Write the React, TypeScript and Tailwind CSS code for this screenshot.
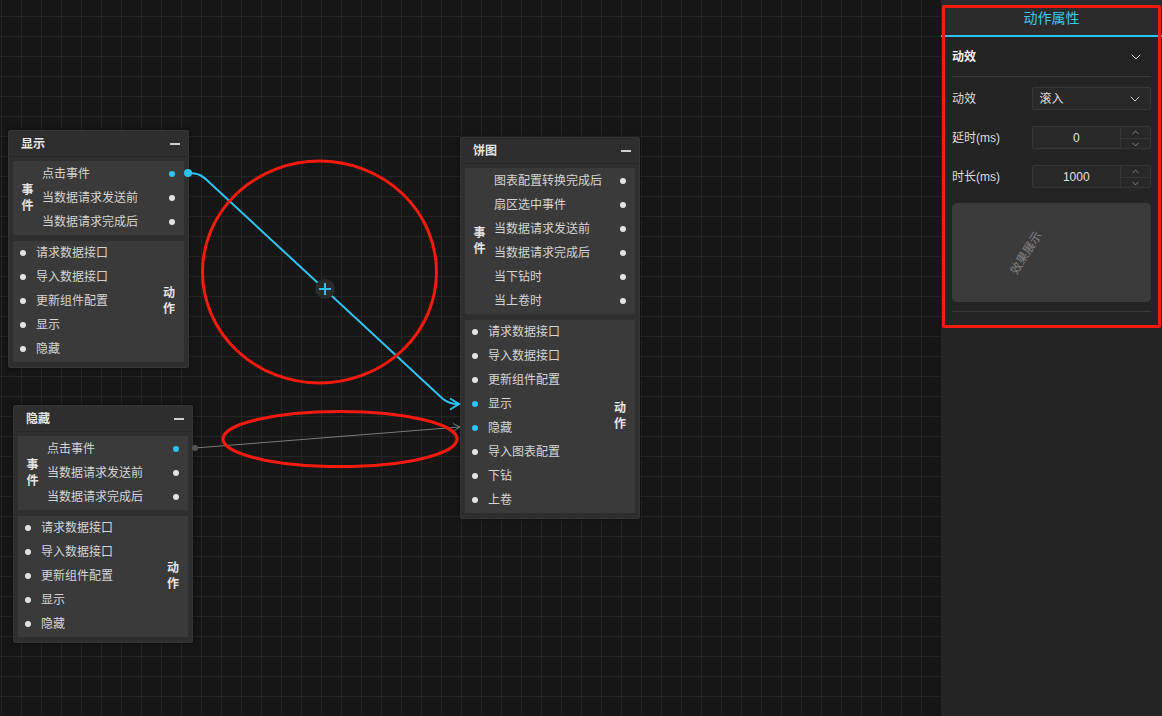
import { ChevronDown, ChevronUp } from "lucide-react";

type NodeProps = {
  title: string;
  x: number;
  y: number;
  width: number;
  events: string[];
  actions: string[];
  activeEvents?: number[];
  activeActions?: number[];
};

const Dot = ({ active }: { active?: boolean }) => (
  <span
    className={`block w-[6px] h-[6px] rounded-full shrink-0 ${
      active ? "bg-[#2cc3f0]" : "bg-[#e2e2e2]"
    }`}
  />
);

const VLabel = ({ text }: { text: string }) => (
  <div className="flex flex-col items-center font-bold text-[12px] leading-[16px] text-[#e4e4e4]">
    {text.split("").map((c) => (
      <span key={c}>{c}</span>
    ))}
  </div>
);

const FlowNode = ({
  title,
  x,
  y,
  width,
  events,
  actions,
  activeEvents = [],
  activeActions = [],
}: NodeProps) => (
  <div
    className="absolute bg-[#2e2e2e] border border-[#363636] rounded-[2px] shadow-[0_0_4px_rgba(0,0,0,0.5)]"
    style={{ left: x, top: y, width }}
  >
    <div className="h-[26px] flex items-center justify-between pl-[12px] pr-[8px] border-b border-[#272727]">
      <span className="text-[12px] font-bold text-[#e6e6e6]">{title}</span>
      <span className="block w-[10px] h-[2px] bg-[#cfcfcf]" />
    </div>
    <div className="px-[4px] pt-[4px] pb-[5px] flex flex-col gap-[6px]">
      <div className="flex bg-[#3a3a3a] py-[1px]">
        <div className="w-[29px] flex items-center justify-center">
          <VLabel text="事件" />
        </div>
        <div className="flex-1 flex flex-col">
          {events.map((e, i) => (
            <div
              key={e}
              className="h-6 flex items-center justify-between pr-[9px] text-[12px] text-[#d4d4d4]"
            >
              <span>{e}</span>
              <Dot active={activeEvents.includes(i)} />
            </div>
          ))}
        </div>
      </div>
      <div className="flex bg-[#3a3a3a] pb-[1px]">
        <div className="flex-1 flex flex-col">
          {actions.map((a, i) => (
            <div
              key={a}
              className="h-6 flex items-center gap-[10px] pl-[7px] text-[12px] text-[#d4d4d4]"
            >
              <Dot active={activeActions.includes(i)} />
              <span>{a}</span>
            </div>
          ))}
        </div>
        <div className="w-[30px] flex items-center justify-center">
          <VLabel text="动作" />
        </div>
      </div>
    </div>
  </div>
);

const baseActions = ["请求数据接口", "导入数据接口", "更新组件配置", "显示", "隐藏"];
const baseEvents = ["点击事件", "当数据请求发送前", "当数据请求完成后"];

const NumberInput = ({ value }: { value: string }) => (
  <div className="w-[120px] h-[23px] flex bg-[#282828] border border-[#363636] rounded-[2px]">
    <div className="flex-1 flex items-center justify-center text-[12px] text-[#e0e0e0]">
      {value}
    </div>
    <div className="w-[30px] border-l border-[#363636] flex flex-col">
      <div className="flex-1 flex items-center justify-center border-b border-[#363636]">
        <ChevronUp size={11} strokeWidth={1.5} className="text-[#a8a8a8]" />
      </div>
      <div className="flex-1 flex items-center justify-center">
        <ChevronDown size={11} strokeWidth={1.5} className="text-[#a8a8a8]" />
      </div>
    </div>
  </div>
);

export default function App() {
  return (
    <div className="w-[1162px] h-[716px] flex overflow-hidden relative font-['Liberation_Sans','Noto_Sans_CJK_SC',sans-serif] leading-none">
      <div className="relative flex-1 bg-[#161616] bg-[linear-gradient(to_right,#252525_1px,transparent_1px),linear-gradient(to_bottom,#252525_1px,transparent_1px)] bg-[size:20px_20px] bg-[position:1px_16px]">
        <FlowNode
          title="显示"
          x={8}
          y={130}
          width={181}
          events={baseEvents}
          actions={baseActions}
          activeEvents={[0]}
        />
        <FlowNode
          title="隐藏"
          x={13}
          y={405}
          width={180}
          events={baseEvents}
          actions={baseActions}
          activeEvents={[0]}
        />
        <FlowNode
          title="饼图"
          x={460}
          y={137}
          width={180}
          events={[
            "图表配置转换完成后",
            "扇区选中事件",
            "当数据请求发送前",
            "当数据请求完成后",
            "当下钻时",
            "当上卷时",
          ]}
          actions={[
            "请求数据接口",
            "导入数据接口",
            "更新组件配置",
            "显示",
            "隐藏",
            "导入图表配置",
            "下钻",
            "上卷",
          ]}
          activeActions={[3, 4]}
        />
        <svg
          className="absolute inset-0 pointer-events-none"
          width={941}
          height={716}
        >
          <path
            d="M188 173 C 198 173, 202 175, 210 183 L 443 399 C 448 403, 452 404, 458 404"
            fill="none"
            stroke="#2cc3f0"
            strokeWidth={2}
          />
          <path
            d="M450 398.5 L 459 404 L 450 409.5"
            fill="none"
            stroke="#2cc3f0"
            strokeWidth={2}
          />
          <circle cx={188} cy={173} r={4} fill="#2cc3f0" />
          <line x1={195} y1={448} x2={460} y2={427} stroke="#7a7a7a" strokeWidth={1} />
          <path d="M453 423.5 L 460 427 L 453.5 431" fill="none" stroke="#7a7a7a" strokeWidth={1} />
          <circle cx={195} cy={448} r={3} fill="#555" />
          <circle cx={325} cy={289} r={10} fill="#2b2b2b" />
          <path d="M319 289 H 331 M325 283 V 295" stroke="#2cc3f0" strokeWidth={2} />
          <ellipse cx={319.5} cy={272} rx={117} ry={111} fill="none" stroke="#f51a0e" strokeWidth={3} />
          <ellipse cx={340} cy={439} rx={117} ry={27.5} fill="none" stroke="#f51a0e" strokeWidth={3} />
        </svg>
      </div>

      <div className="w-[221px] h-full bg-[#242424] flex flex-col">
        <div className="h-[37px] bg-[#2b2b2b] border-b-2 border-[#2cc3f0] flex items-center justify-center">
          <span className="text-[14px] text-[#3cc8f0]">动作属性</span>
        </div>
        <div className="px-[11px] flex flex-col">
          <div className="h-[40px] flex items-center justify-between border-b border-[#3a3a3a] pr-[7px]">
            <span className="text-[12px] font-bold text-[#f0f0f0]">动效</span>
            <ChevronDown size={16} strokeWidth={1.5} className="text-[#e0e0e0]" />
          </div>
          <div className="pt-[10px] flex flex-col gap-[16px]">
            <div className="flex items-center">
              <span className="w-[80px] text-[12px] text-[#dcdcdc]">动效</span>
              <div className="w-[120px] h-[23px] flex items-center justify-between pl-[7px] pr-[7px] bg-[#282828] border border-[#363636] rounded-[2px]">
                <span className="text-[12px] text-[#dcdcdc]">滚入</span>
                <ChevronDown size={16} strokeWidth={1.5} className="text-[#c8c8c8]" />
              </div>
            </div>
            <div className="flex items-center">
              <span className="w-[80px] text-[12px] text-[#dcdcdc]">延时(ms)</span>
              <NumberInput value="0" />
            </div>
            <div className="flex items-center">
              <span className="w-[80px] text-[12px] text-[#dcdcdc]">时长(ms)</span>
              <NumberInput value="1000" />
            </div>
          </div>
          <div className="mt-[15px] h-[99px] bg-[#3b3b3b] rounded-[5px] flex items-center">
            <span className="ml-[50px] text-[12px] text-[#808080] -rotate-[58deg]">效果展示</span>
          </div>
          <div className="mt-[9px] border-t border-[#3a3a3a]" />
        </div>
      </div>

      <div className="absolute left-[942px] top-[5px] w-[219px] h-[323px] border-[3px] border-[#f51a0e] rounded-[2px] pointer-events-none" />
    </div>
  );
}
